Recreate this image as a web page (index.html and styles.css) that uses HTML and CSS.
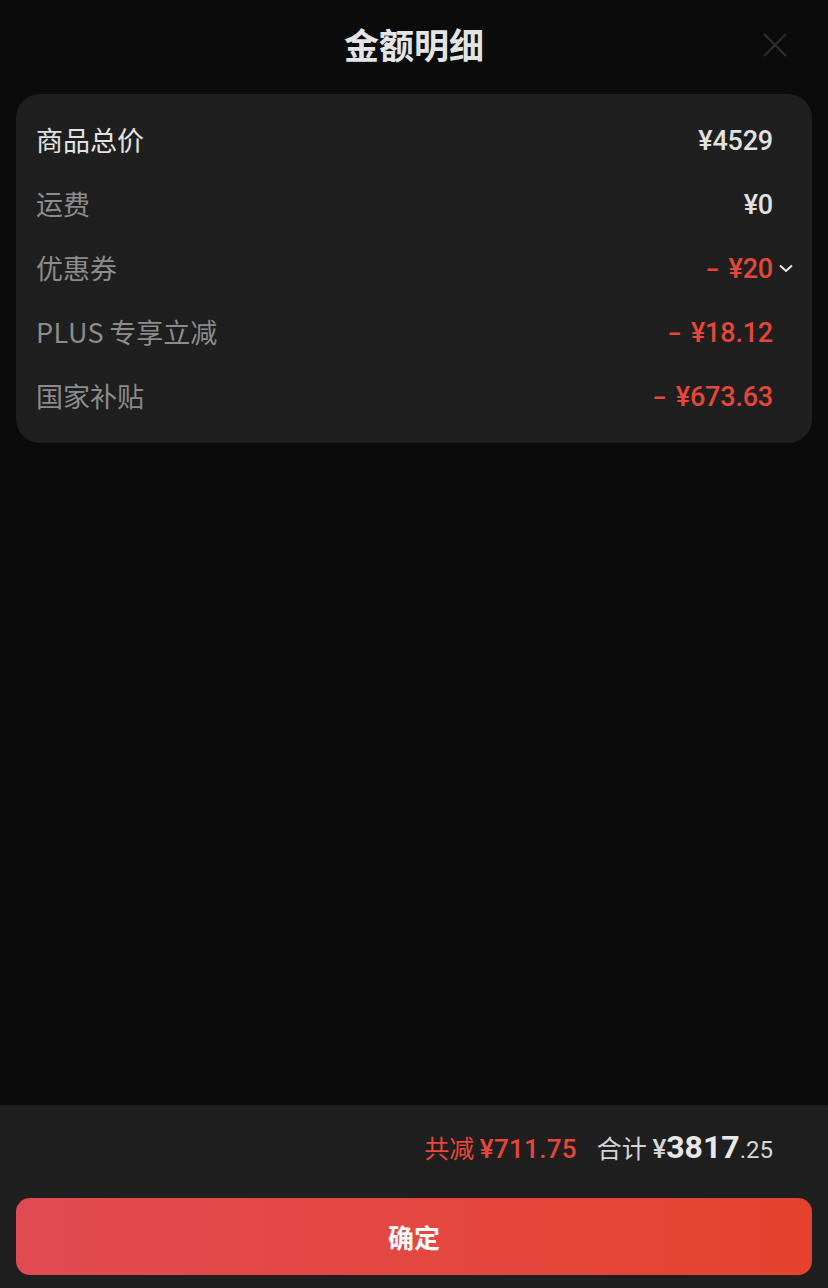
FILE: index.html
```html
<!DOCTYPE html>
<html lang="zh-CN">
<head>
	<meta charset="UTF-8">
	<title>金额明细</title>
	<link rel="stylesheet" href="styles.css">
</head>
<body>
	<div class="sheet">
		<div class="head">
			<h1 class="title">金额明细</h1>
			<span class="close">
				<svg width="26" height="26" viewBox="0 0 26 26"><path d="M2 2L24 24M24 2L2 24" stroke="#2e2e2e" stroke-width="2.2" fill="none"/></svg>
			</span>
		</div>
		<ul class="detail">
			<li class="main">
				<span class="label">商品总价</span>
				<span class="val">¥4529</span>
			</li>
			<li>
				<span class="label">运费</span>
				<span class="val">¥0</span>
			</li>
			<li>
				<span class="label">优惠券</span>
				<span class="val red"><span class="minus">-</span>¥20</span>
				<span class="arrow">
					<svg width="16" height="12" viewBox="0 0 16 12"><path d="M2 3.5L8 9L14 3.5" stroke="#e8e8e8" stroke-width="2" fill="none"/></svg>
				</span>
			</li>
			<li>
				<span class="label"><span class="en">PLUS</span>专享立减</span>
				<span class="val red"><span class="minus">-</span>¥18.12</span>
			</li>
			<li>
				<span class="label">国家补贴</span>
				<span class="val red"><span class="minus">-</span>¥673.63</span>
			</li>
		</ul>
		<div class="space"></div>
		<div class="foot">
			<div class="sum">
				<span class="cut">共减 <b>¥711.75</b></span>
				<span class="total">合计 <i>¥</i><strong>3817</strong><em>.25</em></span>
			</div>
			<a class="btn" href="javascript:;">确定</a>
		</div>
	</div>
</body>
</html>
```
FILE: styles.css
```css
*{
	margin: 0;
	padding: 0;
}
body{
	background-color: #0b0b0b;
	font-family: "Noto Sans CJK SC", "Noto Sans", sans-serif;
	color: #e6e6e6;
}
.sheet{
	width: 828px;
	height: 1288px;
	display: flex;
	flex-direction: column;
}
.head{
	height: 94px;
	position: relative;
	display: flex;
	justify-content: center;
	align-items: center;
}
.head .title{
	font-size: 35px;
	font-weight: bold;
	color: #e4e4e4;
	line-height: 1;
	margin-top: -8px;
}
.head .close{
	position: absolute;
	right: 40px;
	top: 32px;
	width: 26px;
	height: 26px;
}
.detail{
	margin: 0 16px;
	background-color: #1f1f1f;
	border-radius: 24px;
	padding: 13px 39px 16px 20px;
	list-style: none;
}
.detail li{
	height: 64px;
	display: flex;
	align-items: center;
	position: relative;
}
.detail .label{
	flex: 1;
	font-size: 27px;
	color: #8c8c8c;
}
.detail .label .en{
	margin-right: 5px;
	letter-spacing: 0.5px;
}
.detail .main .label{
	color: #e2e2e2;
}
.detail .val{
	font-family: Roboto, "Noto Sans", sans-serif;
	font-size: 27px;
	font-weight: 500;
	color: #e2e2e2;
	letter-spacing: -0.2px;
	margin-top: 4px;
}
.detail .val.red{
	color: #e5473a;
}
.detail .val .minus{
	display: inline-block;
	margin-right: 12px;
	transform: scaleX(1.5);
}
.detail .arrow{
	position: absolute;
	right: -21px;
	top: 27px;
	width: 16px;
	height: 12px;
	display: flex;
}
.space{
	flex: 1;
}
.foot{
	background-color: #1f1f1f;
	height: 183px;
	padding: 0 16px;
}
.sum{
	height: 88px;
	display: flex;
	justify-content: flex-end;
	align-items: center;
	padding-right: 39px;
	padding-bottom: 4px;
	box-sizing: border-box;
}
.sum .cut{
	font-size: 25px;
	color: #e5473a;
	margin-right: 20px;
}
.sum .cut b{
	font-family: Roboto, "Noto Sans", sans-serif;
	font-weight: 500;
	font-size: 26px;
	letter-spacing: 0.3px;
}
.sum .total{
	font-size: 25px;
	color: #d6d6d6;
}
.sum .total i{
	font-style: normal;
	font-family: Roboto, "Noto Sans", sans-serif;
	font-size: 26px;
	font-weight: 500;
}
.sum .total strong{
	font-family: Roboto, "Noto Sans", sans-serif;
	font-size: 32px;
	font-weight: bold;
	color: #e8e8e8;
}
.sum .total em{
	font-style: normal;
	font-family: Roboto, "Noto Sans", sans-serif;
	font-size: 24px;
}
.btn{
	display: flex;
	height: 77px;
	margin-top: 5px;
	border-radius: 14px;
	background: linear-gradient(90deg, #e24b52, #e5432f);
	color: #fff;
	font-size: 26px;
	font-weight: bold;
	justify-content: center;
	align-items: center;
	text-decoration: none;
}
```
